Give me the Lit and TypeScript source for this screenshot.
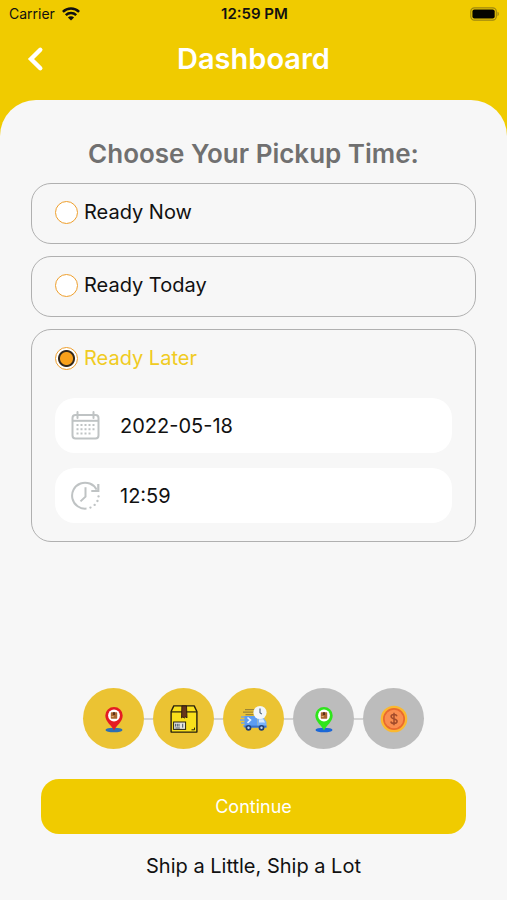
import { LitElement, html, css, svg, TemplateResult } from "lit";
import { customElement, state } from "lit/decorators.js";
import { classMap } from "lit/directives/class-map.js";

const pin = (color: string, base: string) => svg`
  <ellipse cx="14" cy="25" rx="8.5" ry="2.3" fill=${base} />
  <path d="M14 25.5C12 20.5 5.3 17 5.3 10.4a8.7 8.4 0 0 1 17.4 0C22.7 17 16 20.5 14 25.5z" fill=${color} />
  <circle cx="14" cy="10.5" r="5.9" fill="#fff" />
  <rect x="10.8" y="7.3" width="6.4" height="6.4" rx=".6" fill="#a9662f" />
  <path d="M13 7.3h2v2.8h-2z" fill="#5b3018" />
  <path d="M11.5 11.6h2.2" stroke="#f0c080" stroke-width=".9" />`;

const parcel = svg`
  <path d="M3.8 0.9h20.4l2.7 5.6v20.6H1.1V6.5z" fill="#f8df1b" stroke="#26200e" stroke-width="1.4" stroke-linejoin="round" />
  <path d="M1.1 6.9h25.8" stroke="#26200e" stroke-width="1.2" />
  <path d="M11.9.9h4.6l.5 12-1.3-1-1.4 1.1-1.4-1.1-1.4 1z" fill="#65351b" stroke="#2c180c" stroke-width=".9" />
  <rect x="3.6" y="17" width="12" height="7.4" fill="#e4e4dc" stroke="#26200e" stroke-width="1" />
  <path d="M5.6 18.8v2.8M7.3 18.8v2.8M9 18.8v2.8M5.4 23h4.5M12.7 18.8v3.8" stroke="#44546a" stroke-width="1" />
  <path d="M21.5 24.8h3M24.5 22.6v2.2" stroke="#26200e" stroke-width="1" />`;

const van = svg`
  <path d="M5 4.7h10M3 7.2h11M5.5 9.7h8" stroke="#9b8436" stroke-width="1.3" />
  <path d="M1 12h5M0 15h5M1 18h5M3 21h5" stroke="#77a5dd" stroke-width="1.4" />
  <path d="M4.5 11h13v11.5h-13z" fill="#5c9cf2" />
  <path d="M17.5 13h6.3l2.7 4v5.5h-9z" fill="#78b1fb" />
  <path d="M19 14.3h4.3l1.8 3.2H19z" fill="#d7ebff" />
  <path d="M4.5 20.6h22v2h-22z" fill="#3971c8" />
  <path d="M7.5 12.5l3 2.6-3 2.7" fill="none" stroke="#e9f5ff" stroke-width="1.6" />
  <circle cx="20" cy="7.5" r="6.6" fill="#f2f6fb" />
  <path d="M20 3.5v4.2l1.8 1.4" fill="none" stroke="#4c6078" stroke-width="1.1" />
  <circle cx="8.5" cy="22.8" r="2.9" fill="#213e72" /><circle cx="8.5" cy="22.8" r="1.2" fill="#b9d3f3" />
  <circle cx="21.5" cy="22.8" r="2.9" fill="#213e72" /><circle cx="21.5" cy="22.8" r="1.2" fill="#b9d3f3" />`;

const coin = svg`
  <circle cx="14" cy="14" r="13.3" fill="#fbb830" />
  <circle cx="14" cy="14" r="11" fill="#e9692f" />
  <circle cx="14" cy="14" r="9.3" fill="#fa8e50" />
  <path d="M17 11.2c-.4-1.2-1.5-1.7-3-1.7-1.7 0-2.9.8-2.9 2.1 0 3.2 6 1.4 6 4.7 0 1.4-1.3 2.2-3.1 2.2-1.7 0-2.9-.7-3.2-2M14 7.8v12.4" fill="none" stroke="#a34c2b" stroke-width="1.5" />`;

interface Step { name: string; done: boolean; art: TemplateResult }

const steps: Step[] = [
  { name: "Pickup address", done: true, art: pin("#e41b23", "#2d6fb4") },
  { name: "Package", done: true, art: parcel },
  { name: "Pickup time", done: true, art: van },
  { name: "Delivery address", done: false, art: pin("#2fe51c", "#1b67d8") },
  { name: "Payment", done: false, art: coin },
];

const options = [
  { id: "now", label: "Ready Now" },
  { id: "today", label: "Ready Today" },
  { id: "later", label: "Ready Later" },
];

@customElement("app-root")
export class AppRoot extends LitElement {
  @state() private choice = "later";

  static styles = css`
    :host {
      display: flex;
      flex-direction: column;
      min-height: 100vh;
      background: #f0cb00;
      font-family: Inter, "Liberation Sans", sans-serif;
      color: #111;
    }
    * { box-sizing: border-box; }
    svg { display: block; flex: none; }
    .status {
      display: grid;
      grid-template-columns: 1fr auto 1fr;
      align-items: center;
      height: 27px;
      padding: 0 7px 0 9px;
      font-size: 14px;
    }
    .carrier { display: flex; align-items: center; gap: 7px; }
    .clock { font-size: 15px; font-weight: 600; }
    .battery { justify-self: end; }
    .bar {
      display: grid;
      grid-template-columns: 40px 1fr 40px;
      align-items: center;
      height: 73px;
      padding: 0 16px 10px;
    }
    .back {
      display: grid;
      place-items: center;
      width: 40px;
      height: 40px;
      padding: 0;
      border: 0;
      background: none;
      color: #fff;
      cursor: pointer;
    }
    h1 {
      margin: 0;
      font-size: 29px;
      line-height: 36px;
      font-weight: 600;
      text-align: center;
      color: #fff;
    }
    main {
      flex: 1;
      display: flex;
      flex-direction: column;
      padding: 36px 31px 20px;
      border-radius: 36px 36px 0 0;
      background: #f7f7f7;
    }
    h2 {
      margin: 0 0 11px;
      font-size: 26px;
      line-height: 36px;
      font-weight: 600;
      text-align: center;
      color: #707070;
    }
    .choices {
      display: flex;
      flex-direction: column;
      gap: 12px;
      margin: 0;
      padding: 0;
      border: 0;
    }
    .card {
      padding: 16px 23px 18px;
      border: 1px solid #b0b0b0;
      border-radius: 20px;
    }
    .choice {
      display: flex;
      align-items: center;
      gap: 6px;
      font-size: 20px;
      line-height: 25px;
      cursor: pointer;
    }
    .choice.on { color: #f0cb22; }
    .choice input {
      appearance: none;
      width: 23px;
      height: 23px;
      margin: 0;
      border: 1px solid #ee9f2d;
      border-radius: 50%;
      background: #fff;
    }
    .choice input:checked {
      background: radial-gradient(circle, #f9a11b 6px, #33291d 7px, #33291d 8px, #fff 9px);
    }
    .fields {
      display: flex;
      flex-direction: column;
      gap: 15px;
      padding-top: 27px;
    }
    .field {
      display: flex;
      align-items: center;
      gap: 20px;
      height: 55px;
      padding: 0 16px;
      border-radius: 20px;
      background: #fff;
      color: #bfc3c4;
    }
    .field input {
      flex: 1;
      min-width: 0;
      padding: 0;
      border: 0;
      outline: 0;
      background: none;
      font: inherit;
      font-size: 20px;
      color: #111;
    }
    .steps {
      display: flex;
      justify-content: center;
      margin: auto 0 0;
      padding: 40px 0 30px;
      list-style: none;
    }
    .step { display: flex; align-items: center; }
    .step + .step::before {
      content: "";
      width: 9px;
      height: 2px;
      background: #d4d4d4;
    }
    .disc {
      display: grid;
      place-items: center;
      width: 61px;
      height: 61px;
      border-radius: 50%;
      background: #bcbcbc;
    }
    .disc.done { background: #ebc333; }
    .continue {
      height: 55px;
      margin: 0 10px;
      border: 0;
      border-radius: 18px;
      background: #f0cb00;
      color: #fff;
      font: inherit;
      font-size: 18px;
      cursor: pointer;
    }
    .motto {
      margin: 18px 0 0;
      font-size: 20px;
      line-height: 28px;
      text-align: center;
    }
  `;

  private calendarIcon() {
    return svg`<svg width="29" height="29" viewBox="0 0 29 29" fill="none" stroke="currentColor" stroke-width="2" aria-hidden="true">
      <rect x="1.5" y="4" width="26" height="23.5" rx="3" />
      <path d="M1.5 9.8h26" />
      <path d="M6.5 1v6M22.5 1v6" stroke-linecap="round" />
      <path d="M5.5 14h18M5.5 18.3h18M5.5 22.6h14" stroke-dasharray="2 2" />
    </svg>`;
  }

  private clockIcon() {
    return svg`<svg width="29" height="29" viewBox="0 0 29 29" fill="none" stroke="currentColor" stroke-width="2" aria-hidden="true">
      <path d="M15.5 27.6A13 13 0 1 1 25.6 8.6" />
      <path d="M27.3 3v7h-7" stroke-width="2.2" />
      <path d="M14.5 6.3v9.3l-5 4.8" />
      <path d="M19.4 26.6h.1M23.6 23.9h.1M26.4 20h.1M27.5 15.4h.1" stroke-width="2.3" stroke-linecap="round" />
    </svg>`;
  }

  render() {
    return html`
      <div class="status">
        <span class="carrier">Carrier
          <svg width="18" height="14" viewBox="0 0 18 14" fill="none" stroke="#111" stroke-width="2.5" role="img" aria-label="Wi-Fi">
            <path d="M.9 4.9a11.6 11.6 0 0 1 16.2 0M3.8 8.2a7.5 7.5 0 0 1 10.4 0" />
            <path d="M9 13.6L5.9 10.6a4.4 4.4 0 0 1 6.2 0z" fill="#111" stroke="none" />
          </svg>
        </span>
        <span class="clock">12:59 PM</span>
        <svg class="battery" width="30" height="14" viewBox="0 0 30 14" role="img" aria-label="Battery full">
          <rect x=".8" y=".8" width="25.5" height="12.4" rx="3.6" fill="none" stroke="#9d8710" stroke-width="1.2" />
          <rect x="2.4" y="2.4" width="22.3" height="9.2" rx="2" fill="#050500" />
          <path d="M27.5 4.8c1.8.6 1.8 3.8 0 4.4z" fill="#9d8710" />
        </svg>
      </div>
      <header class="bar">
        <button class="back" aria-label="Back">
          <svg width="18" height="26" viewBox="0 0 18 26" fill="none" stroke="currentColor" stroke-width="4.4" stroke-linecap="round">
            <path d="M13.3 3.8L4 13l9.3 9.2" />
          </svg>
        </button>
        <h1>Dashboard</h1>
      </header>
      <main>
        <h2 id="title">Choose Your Pickup Time:</h2>
        <fieldset class="choices" aria-labelledby="title">
          ${options.map((o) => html`
            <div class="card">
              <label class=${classMap({ choice: true, on: this.choice === o.id })}>
                <input type="radio" name="pickup" .checked=${this.choice === o.id} @change=${() => (this.choice = o.id)} />
                ${o.label}
              </label>
              ${o.id === "later" ? html`
                <div class="fields">
                  <label class="field">${this.calendarIcon()}<input type="text" aria-label="Pickup date" value="2022-05-18" /></label>
                  <label class="field">${this.clockIcon()}<input type="text" aria-label="Pickup time" value="12:59" /></label>
                </div>` : ""}
            </div>`)}
        </fieldset>
        <ol class="steps">
          ${steps.map((s) => html`
            <li class="step">
              <span class=${classMap({ disc: true, done: s.done })}>
                <svg width="28" height="28" viewBox="0 0 28 28" role="img" aria-label=${s.name}>${s.art}</svg>
              </span>
            </li>`)}
        </ol>
        <button class="continue">Continue</button>
        <p class="motto">Ship a Little, Ship a Lot</p>
      </main>
    `;
  }
}
